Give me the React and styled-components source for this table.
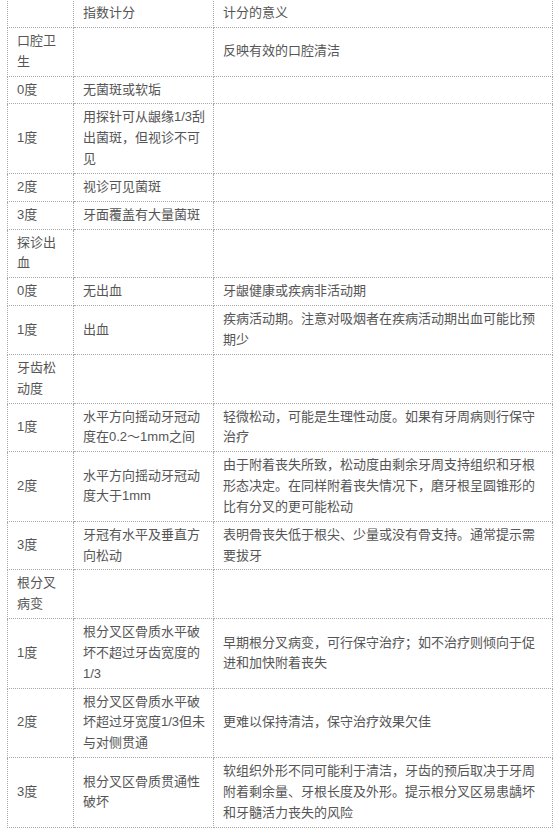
import styled, { createGlobalStyle } from 'styled-components';

const GlobalStyle = createGlobalStyle`
  body {
    margin: 0;
    background: #fff;
  }
`;

const Page = styled.div`
  padding: 0 7px 0 7px;
  overflow: hidden;
`;

const Table = styled.table`
  width: 546px;
  margin-top: -1px;
  border-collapse: collapse;
  table-layout: fixed;
  font-family: "Liberation Sans", "Noto Sans CJK SC", sans-serif;
  font-size: 13px;
  line-height: 20.85px;
  color: #555;
`;

const Cell = styled.td`
  border: 1px dotted #aaa;
  padding: 3px 7px 3px 9px;
  vertical-align: middle;
  word-break: break-all;
`;

const rows = [
  ['', '指数计分', '计分的意义'],
  ['口腔卫生', '', '反映有效的口腔清洁'],
  ['0度', '无菌斑或软垢', ''],
  ['1度', '用探针可从龈缘1/3刮出菌斑，但视诊不可见', ''],
  ['2度', '视诊可见菌斑', ''],
  ['3度', '牙面覆盖有大量菌斑', ''],
  ['探诊出血', '', ''],
  ['0度', '无出血', '牙龈健康或疾病非活动期'],
  ['1度', '出血', '疾病活动期。注意对吸烟者在疾病活动期出血可能比预期少'],
  ['牙齿松动度', '', ''],
  ['1度', '水平方向摇动牙冠动度在0.2～1mm之间', '轻微松动，可能是生理性动度。如果有牙周病则行保守治疗'],
  ['2度', '水平方向摇动牙冠动度大于1mm', '由于附着丧失所致，松动度由剩余牙周支持组织和牙根形态决定。在同样附着丧失情况下，磨牙根呈圆锥形的比有分叉的更可能松动'],
  ['3度', '牙冠有水平及垂直方向松动', '表明骨丧失低于根尖、少量或没有骨支持。通常提示需要拔牙'],
  ['根分叉病变', '', ''],
  ['1度', '根分叉区骨质水平破坏不超过牙齿宽度的1/3', '早期根分叉病变，可行保守治疗；如不治疗则倾向于促进和加快附着丧失'],
  ['2度', '根分叉区骨质水平破坏超过牙宽度1/3但未与对侧贯通', '更难以保持清洁，保守治疗效果欠佳'],
  ['3度', '根分叉区骨质贯通性破坏', '软组织外形不同可能利于清洁，牙齿的预后取决于牙周附着剩余量、牙根长度及外形。提示根分叉区易患龋坏和牙髓活力丧失的风险'],
];

export default function App() {
  return (
    <Page>
      <GlobalStyle />
      <Table>
        <colgroup>
          <col style={{ width: 66 }} />
          <col style={{ width: 140 }} />
          <col />
        </colgroup>
        <tbody>
          {rows.map((r, i) => (
            <tr key={i}>
              <Cell>{r[0]}</Cell>
              <Cell>{r[1]}</Cell>
              <Cell>{r[2]}</Cell>
            </tr>
          ))}
        </tbody>
      </Table>
    </Page>
  );
}
